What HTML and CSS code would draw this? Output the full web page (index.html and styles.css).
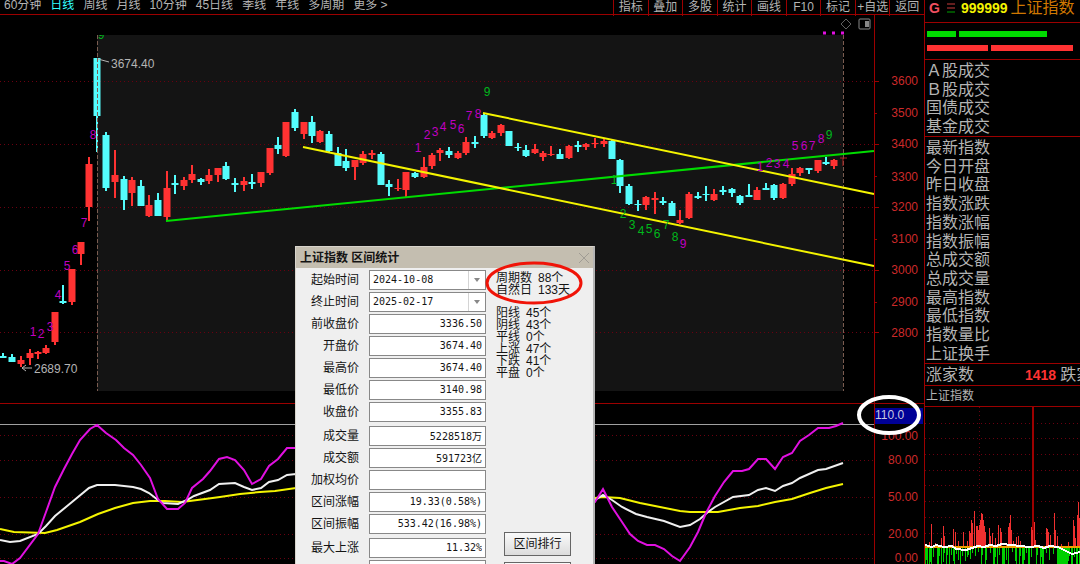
FILE: index.html
```html
<!DOCTYPE html>
<html lang="zh-CN">
<head>
<meta charset="utf-8">
<title>上证指数</title>
<link rel="stylesheet" href="styles.css">
</head>
<body>
<div class="app">
  <main class="market">
    <nav class="toolbar">
      <div class="periods">
        <button>60分钟</button><button class="active">日线</button><button>周线</button><button>月线</button><button>10分钟</button><button>45日线</button><button>季线</button><button>年线</button><button>多周期</button><button>更多 &gt;</button>
      </div>
      <div class="tools">
        <button>指标</button><button>叠加</button><button>多股</button><button>统计</button><button>画线</button><button>F10</button><button>标记</button><button>+自选</button><button>返回</button>
      </div>
    </nav>

    <svg class="chart" viewBox="0 15 924 388" role="img" aria-label="上证指数日线">
      <rect class="range" x="97" y="35" width="746" height="356"/>
      <path class="grid" d="M0 81H874M0 144H874M0 207H874M0 270H874M0 332H874"/>
      <path class="range-edge" d="M97 35V391M843 35V391"/>

      <path class="wick up" d="M21 356V367M30 349V365M38 351V359M46 345V354M55 312V345M72 269V305M81 242V265M89 157V221M115 150V198M132 177V206M149 195V217M167 171V221M184 177V190M192 165V183M209 169V184M218 168V182M244 177V191M261 172V187M270 148V175M286 122V157M304 122V139M320 130V143M355 160V180M363 151V165M372 150V159M398 179V191M406 172V198M424 157V178M432 153V169M440 148V161M458 151V159M466 137V155M492 131V139M501 124V136M535 144V154M543 151V161M551 146V156M569 145V159M586 143V150M595 138V148M604 139V147M646 196V210M655 192V214M680 210V224M689 192V219M714 189V201M757 187V200M783 183V199M792 168V186M800 167V176M818 160V173M834 159V169"/>
      <path class="body up" d="M21 360V364M30 353V358M38 352V354M46 348V353M55 312V342M72 269V302M81 242V254M89 164V207M115 175V182M132 180V193M149 205V216M167 188V217M184 180V186M192 174V180M209 175V181M218 168V175M244 181V185M261 172V183M270 148V173M286 122V156M304 122V134M320 131V142M355 160V167M363 154V163M372 153V155M398 188V189M406 172V190M424 167V177M432 155V166M440 150V153M458 153V158M466 142V153M492 133V138M501 125V133M535 149V153M543 153V157M551 154V155M569 146V158M586 144V147M595 143V144M604 141V144M646 197V205M655 198V200M680 220V223M689 194V218M714 194V200M757 190V200M783 184V198M792 174V184M800 168V173M818 160V171M834 160V166"/>
      <path class="wick down" d="M3 353V358M12 354V362M63 285V304M97 58V152M106 132V191M124 176V210M141 180V206M158 193V216M175 175V194M201 178V185M226 162V180M235 178V192M252 174V189M278 137V154M295 109V131M312 116V143M329 131V153M338 147V166M346 149V171M381 152V185M389 180V196M415 172V178M449 147V158M475 136V148M484 114V138M509 131V146M518 143V151M526 145V157M560 149V159M578 141V152M612 140V159M620 159V193M629 184V205M638 200V211M663 197V205M672 201V216M698 192V199M706 186V201M723 186V195M732 188V197M740 195V205M749 184V197M766 183V190M774 184V200M809 168V174M826 157V165"/>
      <path class="body down" d="M3 356V358M12 357V362M63 301V303M97 58V116M106 135V188M124 179V200M141 186V206M158 200V216M175 183V185M201 179V182M226 166V179M235 183V185M252 182V184M278 145V149M295 112V128M312 122V136M329 134V151M338 153V166M346 161V168M381 154V185M389 184V187M415 173V177M449 151V155M475 142V144M484 115V136M509 131V146M518 147V148M526 150V156M560 154V159M578 145V147M612 141V159M620 160V186M629 186V204M638 204V205M663 201V203M672 203V216M698 196V198M706 194V195M723 190V192M732 189V193M740 196V203M749 195V197M766 188V190M774 185V198M809 168V170M826 162V164"/>
      <path class="last" d="M840 158H847M843 158V166"/>
      <path class="range-edge" d="M97 58V152"/>

      <path class="trend green" d="M166 221L874 151"/>
      <path class="trend yellow" d="M483 113L874 194M303 147L874 266"/>

      <g class="count magenta">
        <text x="33 41 50 58 67 75 84 93" y="336 338 331 299 270 254 227 139">12345678</text>
        <text x="418 427 435 443 453 461 469 478" y="152 139 136 131 129 133 120 118">12345678</text>
        <text x="760 769 777 786 795 804 812 821" y="171 167 168 168 150 150 150 143">12345678</text>
        <text x="683" y="248">9</text>
      </g>
      <g class="count lime">
        <text x="101" y="39">9</text>
        <text x="487" y="96">9</text>
        <text x="829" y="139">9</text>
        <text x="614 623 632 641 649 657 666 675" y="184 218 229 235 233 238 229 241">12345678</text>
      </g>
      <rect class="mask" x="98" y="26" width="8" height="9"/>
      <g class="quote">
        <path d="M98 59L109 62M22 368H32M26 365L22 368L26 371"/>
        <text x="111" y="68">3674.40</text>
        <text x="34" y="373">2689.70</text>
      </g>
      <path class="dots" d="M823 33H826M832 33H835M841 33H844"/>
      <path class="tool-icon" d="M846 19L851 24L846 29L841 24Z"/>
      <rect class="tool-icon bright" x="859" y="19" width="11" height="10" rx="1"/>
      <path class="tool-fill" d="M865 21H869V27H865Z"/>

      <path class="axis" d="M874 15V403M874 81H879M874 113H877M874 144H879M874 176H877M874 207H879M874 239H877M874 270H879M874 302H877M874 332H879"/>
      <g class="scale">
        <text x="918" y="85">3600</text><text x="918" y="117">3500</text><text x="918" y="148">3400</text>
        <text x="918" y="181">3300</text><text x="918" y="211">3200</text><text x="918" y="243">3100</text>
        <text x="918" y="274">3000</text><text x="918" y="306">2900</text><text x="918" y="337">2800</text>
      </g>
    </svg>

    <svg class="chart indicator" viewBox="0 403 924 161" role="img" aria-label="指标">
      <path class="grid" d="M0 435H874M0 460H874M0 497H874M0 534H874M0 558H874"/>
      <path class="frame" d="M0 403H924"/>
      <path class="cursor" d="M0 424H874"/>
      <path class="axis" d="M874 403V564"/>
      <g class="scale">
        <text x="918" y="440">100.00</text><text x="918" y="464">80.00</text><text x="918" y="501">50.00</text>
        <text x="918" y="538">20.00</text><text x="918" y="562">0.00</text>
      </g>
      <polyline class="trend yellow" points="0,529 14,532 45,533 57,530 80,522 98,514 115,508 133,503 150,501 165,501 182,502 205,499 220,497 240,494 260,492 275,491 296,488 595,498 603,497 620,498 640,503 660,507 680,511 690,512 718,512 740,508 758,506 775,502 792,499 810,493 826,488 843,484"/>
      <polyline class="trend white" points="0,540 10,542 20,541 38,534 46,526 55,516 72,502 89,488 97,485 115,485 133,487 141,489 149,493 158,500 163,503 178,504 187,500 194,496 210,490 219,484 235,483 244,487 252,490 261,488 269,482 278,480 287,475 296,474 595,500 603,495 612,500 622,507 636,514 647,517 664,521 680,527 690,525 700,519 708,512 715,507 733,497 749,495 758,490 766,488 775,491 783,486 792,483 800,478 818,470 826,469 843,463"/>
      <polyline class="trend pink" points="0,561 4,561 12,564 20,558 38,534 46,512 55,487 64,469 72,454 80,440 90,429 97,425 106,433 116,440 124,448 133,455 141,465 150,478 158,499 167,509 178,509 185,503 192,488 203,479 210,471 219,459 227,457 235,460 244,470 252,484 261,479 269,466 278,459 287,448 296,448 595,502 603,489 612,507 622,522 630,534 638,541 647,545 655,545 664,549 672,556 680,561 690,547 698,532 706,513 715,496 724,482 733,471 742,471 749,469 758,459 766,459 775,469 783,457 792,453 800,441 809,435 818,428 829,428 836,426 843,423"/>
      <rect class="value-bg" x="875" y="408" width="48" height="16"/>
      <text class="value" x="875" y="419">110.0</text>
      <ellipse class="mark-white" cx="889" cy="415" rx="30" ry="18"/>
    </svg>

    <section class="dialog" role="dialog" aria-labelledby="dlg-title">
      <header class="dialog-head">
        <h2 id="dlg-title">上证指数 区间统计</h2>
        <button class="close" aria-label="关闭"><svg viewBox="0 0 12 12"><path d="M1 1L11 11M11 1L1 11"/></svg></button>
      </header>
      <div class="dialog-body">
        <form class="form">
          <div class="group">
            <label for="f1">起始时间</label><span class="combo"><select id="f1"><option>2024-10-08</option></select><svg viewBox="0 0 18 18"><path class="sep" d="M0 0V18"/><path d="M6 7H12L9 11Z"/></svg></span>
            <label for="f2">终止时间</label><span class="combo"><select id="f2"><option>2025-02-17</option></select><svg viewBox="0 0 18 18"><path class="sep" d="M0 0V18"/><path d="M6 7H12L9 11Z"/></svg></span>
            <label for="f3">前收盘价</label><input id="f3" value="3336.50">
            <label for="f4">开盘价</label><input id="f4" value="3674.40">
            <label for="f5">最高价</label><input id="f5" value="3674.40">
            <label for="f6">最低价</label><input id="f6" value="3140.98">
            <label for="f7">收盘价</label><input id="f7" value="3355.83">
          </div>
          <div class="group">
            <label for="f8">成交量</label><input id="f8" value="5228518万">
            <label for="f9">成交额</label><input id="f9" value="591723亿">
            <label for="f10">加权均价</label><input id="f10" value="">
            <label for="f11">区间涨幅</label><input id="f11" value="19.33(0.58%)">
            <label for="f12">区间振幅</label><input id="f12" value="533.42(16.98%)">
          </div>
          <div class="group">
            <label for="f13">最大上涨</label><input id="f13" value="11.32%">
            <label for="f14"></label><input id="f14" value="">
          </div>
        </form>
        <div class="side">
          <div class="stats">
            <ul><li><span>周期数</span><span>88个</span></li><li><span>自然日</span><span>133天</span></li></ul>
            <ul><li><span>阳线</span><span>45个</span></li><li><span>阴线</span><span>43个</span></li><li><span>平线</span><span>0个</span></li><li><span>上涨</span><span>47个</span></li><li><span>下跌</span><span>41个</span></li><li><span>平盘</span><span>0个</span></li></ul>
          </div>
          <div class="actions"><button>区间排行</button><button aria-label="更多"></button></div>
        </div>
      </div>
      <svg class="mark-red" viewBox="0 0 100 44"><ellipse cx="50" cy="22" rx="47" ry="20"/></svg>
    </section>
  </main>

  <aside class="sidebar">
    <header class="symbol">
      <b class="g">G</b>
      <svg viewBox="0 0 8 10"><path class="r" d="M0 1H8M0 5H8"/><path class="gr" d="M0 9H8"/></svg>
      <b class="code">999999</b><span class="name">上证指数</span>
    </header>
    <div class="strength">
      <div class="bars green"><i class="w1"></i><i class="w2"></i></div>
      <div class="bars red"><i class="w3"></i><i class="w4"></i></div>
    </div>
    <ul class="list"><li>Ａ股成交</li><li>Ｂ股成交</li><li>国债成交</li><li>基金成交</li></ul>
    <ul class="list"><li>最新指数</li><li>今日开盘</li><li>昨日收盘</li><li>指数涨跌</li><li>指数涨幅</li><li>指数振幅</li><li>总成交额</li><li>总成交量</li><li>最高指数</li><li>最低指数</li><li>指数量比</li><li>上证换手</li></ul>
    <div class="breadth"><span>涨家数</span><b>1418</b><span class="fall">跌家数</span></div>
    <div class="mini-title">上证指数</div>
    <svg class="mini" viewBox="925 407 155 157" role="img" aria-label="分时走势">
      <path class="grid" d="M925 423H1080M925 438H1080M925 454H1080M925 470H1080M925 485H1080M925 501H1080M925 517H1080M925 533H1080M979 407V546"/>
      <path class="mid" d="M1033 407V547"/>
      <path class="vol-up" d="M929 547V542M931 547V524M935 547V543M941 547V538M943 547V526M944 547V536M953 547V529M955 547V532M958 547V541M963 547V532M967 547V541M969 547V531M970 547V533M971 547V520M972 547V523M974 547V511M976 547V526M977 547V526M978 547V530M979 547V525M980 547V520M981 547V513M982 547V514M983 547V520M984 547V526M985 547V532M989 547V528M990 547V536M992 547V533M995 547V538M998 547V525M1000 547V528M1001 547V532M1006 547V543M1008 547V527M1009 547V523M1010 547V515M1011 547V530M1013 547V541M1016 547V537M1018 547V536M1020 547V541M1031 547V527M1032 547V530M1034 547V522M1035 547V540M1046 547V528M1047 547V529M1048 547V532M1050 547V535M1054 547V513M1055 547V530M1057 547V536M1061 547V544M1068 547V542M1073 547V520M1074 547V526M1075 547V538M1077 547V515M1078 547V502M1079 547V518"/>
      <path class="vol-down" d="M925 548V564M926 548V560M927 548V564M929 548V564M930 548V562M931 548V564M933 548V557M937 548V564M938 548V564M939 548V556M941 548V564M943 548V562M944 548V553M946 548V564M947 548V555M949 548V564M951 548V555M953 548V561M954 548V564M956 548V554M958 548V560M960 548V564M962 548V556M965 548V561M967 548V557M968 548V555M970 548V559M972 548V553M975 548V556M978 548V552M981 548V564M982 548V555M985 548V564M986 548V560M990 548V553M993 548V564M994 548V564M995 548V557M997 548V564M999 548V555M1002 548V564M1003 548V564M1004 548V564M1006 548V560M1008 548V564M1012 548V552M1015 548V561M1016 548V564M1019 548V564M1020 548V556M1022 548V564M1023 548V564M1024 548V560M1026 548V553M1028 548V564M1029 548V564M1031 548V557M1036 548V564M1037 548V555M1040 548V564M1041 548V557M1042 548V564M1043 548V564M1046 548V553M1049 548V560M1053 548V554M1057 548V564M1058 548V564M1059 548V564M1060 548V564M1061 548V564M1062 548V564M1063 548V564M1064 548V564M1065 548V564M1066 548V564M1067 548V564M1068 548V561M1069 548V556M1071 548V564M1072 548V564M1074 548V557M1076 548V564M1077 548V564M1079 548V564"/>
      <path class="thin-yellow" d="M925 547H1080"/>
      <polyline class="thin-white" points="925,545 932,547 936,545 944,547 952,546 956,549 966,550 972,548 978,546 984,547 990,545 996,546 1002,544 1012,545 1020,546 1030,547 1038,546 1044,548 1050,546 1058,547 1064,550 1072,554 1080,552"/>
    </svg>
  </aside>
</div>
</body>
</html>
```

FILE: styles.css
```css
* { box-sizing: border-box; }

body {
  margin: 0;
  background: #000;
  color: #b4b4b4;
  font: 12px/14px "Liberation Sans", "Noto Sans CJK SC", sans-serif;
  overflow: hidden;
}

button, input, select { font: inherit; color: inherit; margin: 0; }
ul, h2 { margin: 0; padding: 0; list-style: none; }

.app {
  display: grid;
  grid-template-columns: minmax(0, 1fr) 156px;
  height: 100vh;
}

.market { position: relative; overflow: hidden; }

/* toolbar */
.toolbar {
  display: flex;
  justify-content: space-between;
  height: 15px;
  border-bottom: 1px solid #9c0000;
}
.toolbar button {
  padding: 0;
  border: 0;
  background: none;
  line-height: 14px;
  white-space: nowrap;
}
.periods {
  display: flex;
  align-items: flex-end;
  gap: 9px;
  padding: 0 0 2px 4px;
}
.periods .active { color: #3ff; }
.tools {
  display: grid;
  grid-template-columns: repeat(9, 1fr);
  width: 311px;
}
.tools button {
  display: flex;
  align-items: flex-end;
  justify-content: center;
  padding-bottom: 2px;
  border-left: 1px solid #9c0000;
}

/* charts */
.chart { display: block; width: 100%; overflow: visible; }
.chart text { font-size: 12px; }
.range { fill: #141414; }
.mask { fill: #000; }
.grid { fill: none; stroke: #6a0010; stroke-dasharray: 1 3; shape-rendering: crispEdges; }
.range-edge { fill: none; stroke: #7a5c50; stroke-dasharray: 4 2; shape-rendering: crispEdges; }
.wick { stroke-width: 2; }
.body { stroke-width: 7; }
.up { stroke: #ff3232; }
.down { stroke: #54fcfc; }
.last { fill: none; stroke: #b02020; }
.trend { fill: none; stroke-width: 2; }
.trend.green { stroke: #00dc00; }
.trend.yellow { stroke: #f4f400; }
.trend.white { stroke: #f0f0f0; }
.trend.pink { stroke: #e010e0; }
.count { text-anchor: middle; }
.magenta { fill: #c000c0; }
.lime { fill: #00b81c; }
.quote { fill: #b4b4b4; }
.quote path { fill: none; stroke: #b4b4b4; }
.dots { stroke: #e010e0; stroke-width: 3; }
.tool-icon { fill: none; stroke: #606060; }
.tool-icon.bright { stroke: #888; }
.tool-fill { fill: #888; }
.axis, .frame { fill: none; stroke: #9c0000; shape-rendering: crispEdges; }
.scale { fill: #cc2a2a; text-anchor: end; }
.cursor { stroke: #a0a0a0; shape-rendering: crispEdges; }
.value-bg { fill: #000096; }
.value { fill: #c8c8e0; }
.mark-white { fill: none; stroke: #fff; stroke-width: 4; }

/* statistics dialog */
.dialog {
  position: absolute;
  left: 295px;
  top: 246px;
  width: 300px;
  border: 1px solid #d8d4cc;
  border-right: 2px solid #b4b4b4;
  background: #efefef;
  color: #141414;
}
.dialog-head {
  display: flex;
  align-items: center;
  justify-content: space-between;
  height: 21px;
  padding: 0 3px 0 4px;
  background: #c4beb0;
}
.dialog-head h2 { font-size: 12px; line-height: 14px; }
.close { width: 12px; height: 12px; padding: 0; border: 0; background: none; }
.close svg { display: block; fill: none; stroke: #a09c94; }
.dialog-body { display: flex; align-items: flex-start; gap: 10px; padding: 2px 0 0 15px; }
.form { display: grid; gap: 4px; }
.group {
  display: grid;
  grid-template-columns: 48px 117px;
  gap: 2px 10px;
  align-items: center;
}
.group label { text-align: right; white-space: nowrap; }
.group input, .group select {
  display: block;
  width: 100%;
  height: 20px;
  border: 1px solid #888;
  border-radius: 0;
  background: #fff;
  font: 10px/16px "DejaVu Sans Mono", "Noto Sans CJK SC", monospace;
}
.group input { padding: 0 3px 2px; text-align: right; }
.combo { position: relative; }
.group select { appearance: none; padding: 0 20px 0 3px; }
.combo svg { position: absolute; right: 0; top: 1px; width: 18px; fill: #888; pointer-events: none; }
.combo .sep { stroke: #aaa; }
.side { display: flex; flex-direction: column; }
.stats { display: grid; gap: 11px; padding: 2px 0 0; height: 262px; align-content: start; }
.stats li { display: flex; gap: 6px; line-height: 12px; }
.actions { display: grid; gap: 6px; padding-left: 8px; }
.actions button {
  width: 67px;
  height: 24px;
  padding: 0;
  border: 1px solid #666;
  background: linear-gradient(#fafafa, #dcdcdc);
  color: #141414;
}
.mark-red {
  position: absolute;
  left: 188px;
  top: 14px;
  width: 100px;
  fill: none;
  stroke: #f01408;
  stroke-width: 3;
}

/* quote sidebar */
.sidebar {
  display: grid;
  grid-template-columns: minmax(0, 1fr);
  grid-template-rows: 23px 37px 77px 227px 22px 21px 1fr;
  border-left: 1px solid #9c0000;
  overflow: hidden;
  font-size: 16px;
  line-height: 18px;
  white-space: nowrap;
}
.sidebar > :not(svg) { border-bottom: 1px solid #9c0000; }
.symbol { display: flex; align-items: center; padding: 0 0 7px 4px; }
.symbol b { font-size: 14px; }
.symbol svg { width: 8px; margin: 0 6px 0 7px; fill: none; }
.symbol .r { stroke: #c83c3c; }
.symbol .gr { stroke: #00a000; }
.g { color: #f05060; }
.code { color: #f4f400; }
.name { margin-left: 3px; color: #d07800; }
.strength { display: grid; gap: 8px; align-content: center; padding: 0 0 0 2px; }
.bars { display: flex; gap: 3px; }
.bars i { height: 6px; }
.green i { background: #00dc00; }
.red i { background: #ff3232; }
.w1 { width: 29px; }
.w2 { width: 88px; }
.w3 { width: 61px; }
.w4 { width: 82px; }
.list { display: flex; flex-direction: column; justify-content: space-between; padding: 2px 1px 0; }
.breadth { display: flex; align-items: center; padding-left: 1px; }
.breadth b { margin-left: 51px; color: #ff3232; font-size: 14px; }
.fall { margin-left: 4px; }
.mini-title { padding-left: 1px; font-size: 12px; line-height: 20px; }
.mini { display: block; width: 100%; shape-rendering: crispEdges; }
.mini .mid { stroke: #9c0000; stroke-width: 2; }
.vol-up { stroke: #f03030; }
.vol-down { stroke: #00d000; }
.thin-yellow { stroke: #f0a000; stroke-width: 2; }
.thin-white { fill: none; stroke: #fff; stroke-width: 2; }
```
